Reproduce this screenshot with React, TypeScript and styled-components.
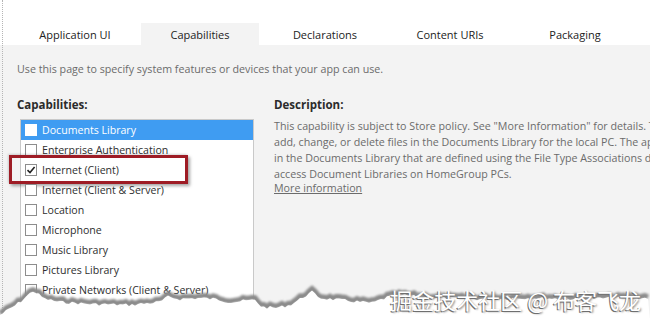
import styled, { createGlobalStyle } from "styled-components";

const GlobalStyle = createGlobalStyle`
  body {
    margin: 0;
    font-family: "Open Sans", "Noto Sans", sans-serif;
    background: #ffffff;
  }
`;

const tabs = [
  "Application UI",
  "Capabilities",
  "Declarations",
  "Content URIs",
  "Packaging",
];

const capabilities = [
  "Documents Library",
  "Enterprise Authentication",
  "Internet (Client)",
  "Internet (Client & Server)",
  "Location",
  "Microphone",
  "Music Library",
  "Pictures Library",
  "Private Networks (Client & Server)",
];

const descriptionLines = [
  'This capability is subject to Store policy. See "More Information" for details. The app can',
  "add, change, or delete files in the Documents Library for the local PC. The app can only access file types",
  "in the Documents Library that are defined using the File Type Associations declaration. The app can't",
  "access Document Libraries on HomeGroup PCs.",
];

// torn paper edge along the bottom, jitter is seeded so it stays the same each render
const edgePoints: [number, number][] = [
  [0, 313], [8, 308], [20, 300], [28, 293], [33, 289], [38, 292], [45, 297],
  [60, 300], [90, 302], [130, 303], [160, 300], [168, 295], [180, 297],
  [200, 296], [215, 297], [230, 300], [255, 298], [262, 305], [275, 306],
  [290, 303], [305, 294], [312, 290], [320, 296], [340, 298], [360, 300],
  [372, 301], [388, 295], [400, 293], [430, 296], [480, 297], [530, 296],
  [580, 297], [620, 296], [650, 296],
];

const buildEdge = () => {
  let seed = 7;
  const rand = () => {
    seed = (seed * 9301 + 49297) % 233280;
    return seed / 233280;
  };
  const pts: string[] = [];
  for (let x = 0; x <= 650; x += 3) {
    let i = 0;
    while (i < edgePoints.length - 2 && edgePoints[i + 1][0] < x) i++;
    const [x0, y0] = edgePoints[i];
    const [x1, y1] = edgePoints[i + 1];
    const t = x1 === x0 ? 0 : (x - x0) / (x1 - x0);
    const y = y0 + (y1 - y0) * t + (rand() - 0.5) * 3;
    pts.push(`${x},${(y - 278).toFixed(1)}`);
  }
  return pts;
};

const CheckMark = () => (
  <svg width="10" height="10" viewBox="0 0 10 10">
    <path d="M1.5 5.2 L4 7.6 L8.6 2" fill="none" stroke="#222" strokeWidth="1.6" />
  </svg>
);

const TornEdge = () => {
  const pts = buildEdge();
  const line = "M" + pts.join(" L");
  return (
    <EdgeSvg width="650" height="40" viewBox="0 0 650 40">
      <defs>
        <filter id="grain" x="-5%" y="-50%" width="110%" height="200%">
          <feGaussianBlur stdDeviation="0.8" />
        </filter>
      </defs>
      <path d={line} fill="none" stroke="#8a8a8a" strokeWidth="5" filter="url(#grain)" />
      <path d={`${line} L650,40 L0,40 Z`} fill="#ffffff" transform="translate(0,2)" />
    </EdgeSvg>
  );
};

const App = () => {
  return (
    <>
      <GlobalStyle />
      <Frame>
        <TabBar>
          {tabs.map((t) => (
            <Tab key={t} $active={t === "Capabilities"}>
              {t}
            </Tab>
          ))}
        </TabBar>
        <Body>
          <Intro>
            Use this page to specify system features or devices that your app
            can use.
          </Intro>
          <Columns>
            <div>
              <Heading>Capabilities:</Heading>
              <ListBox>
                {capabilities.map((c, i) => (
                  <Row key={c} $selected={i === 0} $highlight={i === 2}>
                    <Box $selected={i === 0}>{i === 2 && <CheckMark />}</Box>
                    {c}
                  </Row>
                ))}
              </ListBox>
            </div>
            <div>
              <Heading>Description:</Heading>
              <Description>
                {descriptionLines.map((l) => (
                  <div key={l}>{l}</div>
                ))}
              </Description>
              <MoreLink>More information</MoreLink>
            </div>
          </Columns>
        </Body>
        <TornEdge />
        <Watermark>掘金技术社区 @ 布客飞龙</Watermark>
      </Frame>
    </>
  );
};

export default App;

const Frame = styled.div`
  position: relative;
  width: 650px;
  height: 318px;
  overflow: hidden;
  background: #f3f3f3;
  &::before {
    content: "";
    position: absolute;
    left: 2px;
    top: 0;
    bottom: 0;
    border-left: 1px dotted #b5b5b5;
  }
`;

const TabBar = styled.div`
  display: flex;
  align-items: flex-end;
  gap: 7px;
  height: 45px;
  padding-left: 16px;
  background: #ffffff;
`;

const Tab = styled.div<{ $active?: boolean }>`
  width: 118px;
  height: 22px;
  display: flex;
  align-items: center;
  justify-content: center;
  font-size: 11px;
  color: #222;
  background: ${(p) => (p.$active ? "#f3f3f3" : "#ffffff")};
`;

const Body = styled.div`
  padding: 16px 0 0 17px;
`;

const Intro = styled.p`
  margin: 0;
  font-size: 10.7px;
  line-height: 16px;
  color: #6b6b6b;
  white-space: nowrap;
`;

const Columns = styled.div`
  display: grid;
  grid-template-columns: 240px auto;
  column-gap: 17px;
  margin-top: 20px;
`;

const Heading = styled.div`
  font-size: 11.5px;
  font-weight: 700;
  line-height: 16px;
  color: #2b2b2b;
`;

const ListBox = styled.div`
  width: 232px;
  margin: 6px 0 0 3px;
  background: #ffffff;
  border: 1px solid #c9c9c9;
  padding-bottom: 40px;
`;

const Row = styled.div<{ $selected?: boolean; $highlight?: boolean }>`
  position: relative;
  display: flex;
  align-items: center;
  gap: 5px;
  height: 20px;
  padding-left: 4px;
  font-size: 10.6px;
  white-space: nowrap;
  color: ${(p) => (p.$selected ? "#ffffff" : "#2e2e2e")};
  background: ${(p) => (p.$selected ? "#3f9cf2" : "transparent")};
  &::after {
    content: "";
    display: ${(p) => (p.$highlight ? "block" : "none")};
    position: absolute;
    left: -12px;
    top: -5px;
    width: 173px;
    height: 23px;
    border: 3px solid #9e1c25;
    box-shadow: 2px 2px 3px rgba(0, 0, 0, 0.35), -1px -1px 2px rgba(0, 0, 0, 0.15);
  }
`;

const Box = styled.span<{ $selected?: boolean }>`
  display: flex;
  align-items: center;
  justify-content: center;
  box-sizing: border-box;
  width: 12px;
  height: 12px;
  background: #ffffff;
  border: 1px solid ${(p) => (p.$selected ? "#ffffff" : "#8d8d8d")};
`;

const Description = styled.div`
  margin-top: 5px;
  font-size: 10.7px;
  line-height: 16px;
  color: #6b6b6b;
  white-space: nowrap;
`;

const MoreLink = styled.a`
  display: block;
  font-size: 10.7px;
  line-height: 13px;
  color: #6b6b6b;
  text-decoration: underline;
`;

const EdgeSvg = styled.svg`
  position: absolute;
  left: 0;
  bottom: 0;
`;

const Watermark = styled.div`
  position: absolute;
  right: 9px;
  bottom: 6px;
  font-family: "Noto Sans CJK SC", sans-serif;
  font-size: 22px;
  line-height: 25px;
  color: #ffffff;
  text-shadow: -1px 1px 0 #6f6f6f, 1px 1px 2px #8a8a8a;
  white-space: nowrap;
`;
